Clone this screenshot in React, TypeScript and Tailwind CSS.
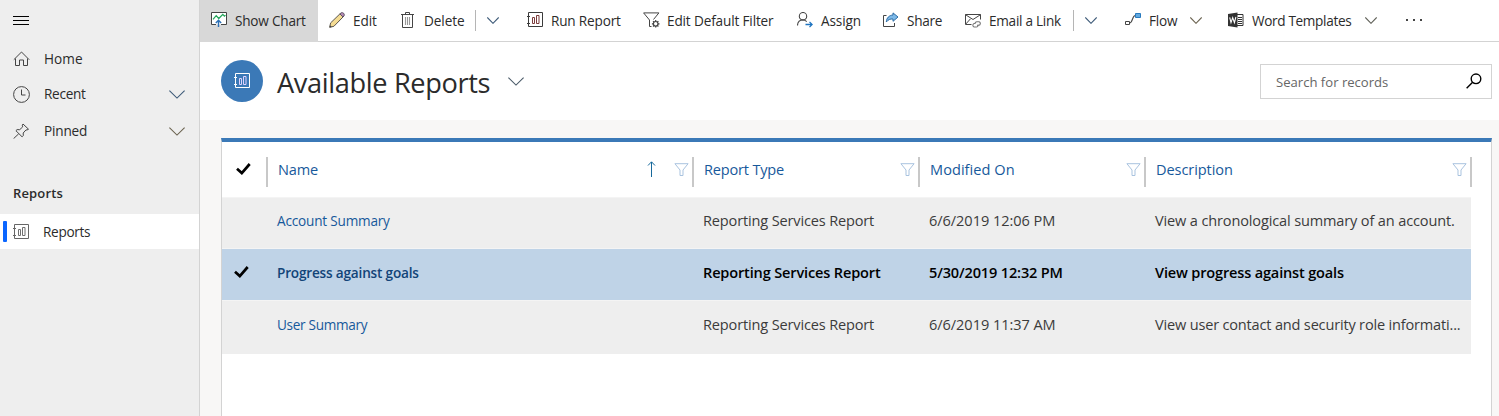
import React from "react";

type IconProps = { className?: string };

function Chevron({ className = "" }: IconProps) {
  return (
    <svg className={className} viewBox="0 0 16 9" fill="none" stroke="currentColor" strokeWidth="1.1" preserveAspectRatio="none">
      <path d="M.4.6 8 8.1 15.6.6" vectorEffect="non-scaling-stroke" />
    </svg>
  );
}

function ReportIcon({ className = "", bar = "currentColor" }: IconProps & { bar?: string }) {
  return (
    <svg className={className} viewBox="0 0 16 16" fill="none" stroke="currentColor">
      <path d="M1.5.5h14v14h-14zM0 4.5h3M0 11.5h3" />
      <path stroke={bar} d="M5.5 5.500h2v6h-2zM9.500 3.500h2.500v8H9.500z" />
    </svg>
  );
}

function ShowChartIcon() {
  return (
    <svg className="size-4" viewBox="0 0 16 16" fill="none">
      <path d="M.5.5h15v12H.5z" fill="#fff" />
      <path d="M5 12.500H.5V.5h15v12H10" stroke="#444" />
      <path d="m2 7.300 3.200-3.600 2.600 2.800 4-4.200 1.600 1.800 1.100-1" stroke="#21a559" strokeWidth="1.200" />
      <path d="M7.500 15V8.600M4.800 11l2.700-2.700 2.700 2.700" stroke="#2b6fb5" strokeWidth="1.400" />
    </svg>
  );
}

function EditIcon() {
  return (
    <svg className="size-4" viewBox="0 0 16 16" fill="none" strokeLinejoin="round">
      <path d="M1.600 10.900 10.900 1.900 14 5 4.900 14.300.7 15.300z" fill="#f5dc93" stroke="#5c564c" />
      <path d="M10.900 1.900 12.200.8Q13.600.3 14.700 1.300 15.700 2.600 15 4L14 5z" fill="#b78bb5" stroke="#5d5265" />
      <path d="M.5 15.500 1 13.200 2.800 15z" fill="#444" />
    </svg>
  );
}

function DeleteIcon() {
  return (
    <svg className="size-4" viewBox="0 0 16 16" fill="none" stroke="#454545">
      <path d="M1 2.500h13M5.500 2.500v-2h4v2M2.500 2.500v13h10v-13" />
      <path d="M5.500 5v8M7.500 5v8M9.500 5v8" stroke="#999" strokeWidth="1.100" />
    </svg>
  );
}

function FilterGearIcon() {
  return (
    <svg className="h-4 w-[17px] shrink-0" viewBox="0 0 17 16" fill="none" stroke="#454545">
      <path d="M8.500 14.500H6.500V8L.6.900h15.300L10.500 7.500" />
      <circle cx="12.700" cy="11.800" r="2.300" strokeWidth="1.200" />
      <path strokeWidth="1.200" d="M12.700 8v1.500M12.700 14.100v1.500M8.900 11.800h1.500M15 11.800h1.500M10 9.100l1.100 1.100M14.300 13.400l1.100 1.100M15.400 9.100l-1.100 1.100M11.100 13.400 10 14.500" />
    </svg>
  );
}

function AssignIcon() {
  return (
    <svg className="size-4" viewBox="0 0 16 16" fill="none" stroke="#454545">
      <circle cx="6" cy="4.200" r="3.700" strokeWidth="1.100" />
      <path d="M.5 13.500C.6 10 3 8 6 8c1.500 0 2.800.6 3.700 1.600" strokeWidth="1.100" />
      <path d="M8.500 12.500h6.500M12.500 9.900l2.600 2.600-2.600 2.600" stroke="#1f74c0" strokeWidth="1.300" />
    </svg>
  );
}

function ShareIcon() {
  return (
    <svg className="size-4" viewBox="0 0 16 16" fill="none">
      <path d="M3.500 3.500h-3v11h11V11" stroke="#454545" />
      <path d="M10 .9 15 5l-5 4.300V7C7.300 6.700 5.200 7.600 3.300 10 3.500 6 6 3.300 10 3z" fill="#7db9e8" stroke="#2c6ca5" strokeLinejoin="round" />
    </svg>
  );
}

function EmailIcon() {
  return (
    <svg className="size-4" viewBox="0 0 16 16" fill="none" stroke="#454545">
      <path d="M6.500 12.500h-6v-10h15v5M.5 2.700 8 7.500l7.500-4.800M.8 12 5.500 6.800" />
      <path d="M10.500 11.500H9a1.900 1.900 0 0 0 0 3.500h2.400a1.800 1.800 0 0 0 1.600-2.300M12 13.300h1.500a1.800 1.800 0 0 0 .6-3.500h-2.300a1.800 1.800 0 0 0-1.700 2" stroke="#777" strokeWidth="1.100" />
    </svg>
  );
}

function FlowIcon() {
  return (
    <svg className="size-4" viewBox="0 0 16 16" fill="none">
      <path d="M.5 9.500h4v3h-4z" stroke="#454545" />
      <path d="M4.500 11c3.500 0 2.300-7.500 6-7.500" stroke="#454545" strokeWidth="1.200" />
      <path d="M10.500 1.500h5v4h-5z" fill="#62a9df" stroke="#287abf" />
    </svg>
  );
}

function WordIcon() {
  return (
    <svg className="size-4" viewBox="0 0 16 16" fill="none">
      <path d="M9 2.500h6v11H9" fill="#fff" stroke="#333" />
      <path d="M10 5.500h4M10 7.500h4M10 9.500h4M10 11.500h4" stroke="#333" />
      <path d="M0 2 9.500.4v15.200L0 14z" fill="#333" />
      <path d="m1.700 5.300 1.300 5.300 1.700-5 1.700 5 1.500-5.600" stroke="#fff" strokeWidth="1.100" />
    </svg>
  );
}

function FunnelIcon() {
  return (
    <svg className="h-[13px] w-[15px] shrink-0" viewBox="0 0 15 13" fill="none" stroke="#a9c3df">
      <path d="M.9.700h13.200L9 7v5.500H6V7z" />
    </svg>
  );
}

function CheckIcon() {
  return (
    <svg className="h-3 w-[15px]" viewBox="0 0 15 12" fill="none" stroke="#000" strokeWidth="2.700">
      <path d="m1 5.800 4.800 4.300L13.700 1" />
    </svg>
  );
}

type CommandProps = {
  icon: React.ReactNode;
  label: string;
  width: string;
  text: string;
  active?: boolean;
  children?: React.ReactNode;
};

function Command({ icon, label, width, text, active, children }: CommandProps) {
  return (
    <button className={`flex shrink-0 items-center pl-[11px] ${width} ${active ? "h-[42px] bg-[#d8d8d8] pl-3 pb-px" : "h-[41px]"}`}>
      <span className="-mt-px flex w-[24px] shrink-0">{icon}</span>
      <span className={`-ml-px whitespace-nowrap pl-px pt-[2px] ${text}`}>{label}</span>
      {children}
    </button>
  );
}

function SplitArrow() {
  return (
    <>
      <span className="h-[21px] w-px shrink-0 bg-[#b5b5b5]" />
      <Chevron className="ml-[11px] h-[7px] w-3 shrink-0 text-[#3d5a78]" />
    </>
  );
}

function Toolbar() {
  return (
    <div className="flex h-[42px] items-start border-b border-[#d3d3d3] text-[13.6px] text-[#2b2b2b]">
      <Command active icon={<ShowChartIcon />} label="Show Chart" width="w-[118px]" text="tracking-[-0.22px]" />
      <Command icon={<EditIcon />} label="Edit" width="w-[71px]" text="tracking-[-0.09px]" />
      <Command icon={<DeleteIcon />} label="Delete" width="w-[127px]" text="w-[52px] text-left tracking-[-0.1px]">
        <SplitArrow />
      </Command>
      <Command icon={<ReportIcon className="size-4 text-[#3b3b3b]" bar="#7b3b3b" />} label="Run Report" width="w-[116px]" text="tracking-[-0.18px]" />
      <Command icon={<FilterGearIcon />} label="Edit Default Filter" width="w-[154px]" text="tracking-[-0.15px]" />
      <Command icon={<AssignIcon />} label="Assign" width="w-[86px]" text="tracking-[-0.12px]" />
      <Command icon={<ShareIcon />} label="Share" width="w-[82px]" text="tracking-[-0.3px]" />
      <Command icon={<EmailIcon />} label="Email a Link" width="w-[160px]" text="w-[85px] text-left tracking-[-0.27px]">
        <SplitArrow />
      </Command>
      <Command icon={<FlowIcon />} label="Flow" width="w-[103px]" text="w-[42px] text-left tracking-[-0.2px]">
        <Chevron className="h-[7px] w-3 shrink-0 text-[#6b6350]" />
      </Command>
      <Command icon={<WordIcon />} label="Word Templates" width="w-[177px]" text="w-[114px] text-left tracking-[-0.34px]">
        <Chevron className="h-[7px] w-3 shrink-0 text-[#5f6058]" />
      </Command>
      <div className="flex h-[40px] items-center gap-[5px] pl-3">
        <span className="size-[2px] bg-[#444]" />
        <span className="size-[2px] bg-[#444]" />
        <span className="size-[2px] bg-[#444]" />
      </div>
    </div>
  );
}

function Sidebar() {
  return (
    <nav className="w-[200px] shrink-0 border-r border-[#d3d3d3] bg-[#eee] text-[13.6px] text-[#2b2b2b]">
      <div className="flex h-10 items-center pl-[13px]">
        <div className="flex flex-col gap-[3px]">
          <span className="h-px w-4 bg-black" />
          <span className="h-px w-4 bg-black" />
          <span className="h-px w-4 bg-black" />
        </div>
      </div>
      <div className="flex h-9 items-center pl-[13px] pt-0.5">
        <svg className="mr-[14px] h-4 w-[17px]" viewBox="0 0 17 16" fill="none" stroke="#454545">
          <path d="M.8 8.700 8.500 1l7.700 7.700M2.500 7.500v7h4V9h4v5.500h4v-7" />
        </svg>
        <span className="tracking-[0.05px]">Home</span>
      </div>
      <div className="flex h-9 items-center pl-[13px]">
        <svg className="mr-[14px] size-[17px]" viewBox="0 0 17 17" fill="none" stroke="#454545">
          <circle cx="8.500" cy="8.500" r="7.900" />
          <path d="M8.500 3.500v5.500h4" />
        </svg>
        <span className="pt-px tracking-[-0.29px]">Recent</span>
        <Chevron className="ml-auto mr-[14px] h-[9px] w-4 text-[#3d5a78]" />
      </div>
      <div className="flex h-[38px] items-center pl-[13px]">
        <svg className="mr-[14px] h-4 w-[17px]" viewBox="0 0 17 16" fill="none" stroke="#454545">
          <path d="m10 1 5.500 5.200-1.500.8-1-.1-2.800 3.100.1 2.500-1.200 1.300-6.200-6.100 1.200-1.100 2.600.1L9.700 3.900 9.300 2.200zM5.700 10.800.6 15.600" strokeLinejoin="round" />
        </svg>
        <span className="tracking-[-0.18px]">Pinned</span>
        <Chevron className="ml-auto mr-[14px] h-[9px] w-4 text-[#6b6350]" />
      </div>
      <div className="flex h-16 items-end pb-[11px] pl-[13px] text-[13px] font-semibold leading-5">
        <span className="tracking-[0.16px]">Reports</span>
      </div>
      <div className="flex h-[35px] items-center bg-white pl-[3px]">
        <span className="h-[21px] w-1 rounded-[1px] bg-[#0b66ff]" />
        <ReportIcon className="ml-1.5 mr-[14px] size-4 text-[#666]" bar="#707070" />
        <span className="pt-[2px] tracking-[-0.31px]">Reports</span>
      </div>
    </nav>
  );
}

function PageHeader() {
  return (
    <header className="flex h-[78px] items-start bg-white pl-[21px] pr-[7px]">
      <div className="mt-[18px] flex size-[42px] items-center justify-center rounded-full bg-[#3b79b7]">
        <ReportIcon className="size-4 text-white" bar="#ded2ff" />
      </div>
      <h1 className="ml-[14px] mt-[22px] text-[27.2px] leading-[38px] tracking-[-0.36px] text-[#2b2b2b]">Available Reports</h1>
      <Chevron className="ml-[18px] mt-[35px] h-[9px] w-4 text-[#4a5a68]" />
      <div className="ml-auto mt-[22px] flex h-[35px] w-[232px] items-center border border-[#d3d3d3] pl-[15px] pr-[9px]">
        <span className="pt-[2px] text-[13.1px] text-[#666]">Search for records</span>
        <svg className="-mt-0.5 ml-auto size-4" viewBox="0 0 16 16" fill="none" stroke="#000" strokeWidth="1.400">
          <circle cx="10" cy="5.800" r="4.800" />
          <path d="M6.600 9.300.6 15.300" />
        </svg>
      </div>
    </header>
  );
}

const gridCols = "grid grid-cols-[46px_426px_226px_226px_326px]";

const columns = [
  { label: "Name", text: "tracking-[-0.17px]", sorted: true },
  { label: "Report Type", text: "tracking-[-0.19px]" },
  { label: "Modified On", text: "tracking-[0.05px]" },
  { label: "Description", text: "tracking-[-0.08px]" },
];

const rows = [
  {
    name: "Account Summary", nameText: "tracking-[-0.2px]",
    type: "Reporting Services Report",
    modified: "6/6/2019 12:06 PM", modifiedText: "tracking-[-0.05px]",
    description: "View a chronological summary of an account.", descriptionText: "tracking-[-0.145px]",
    size: "h-[51px] pb-1",
  },
  {
    name: "Progress against goals", nameText: "tracking-[-0.19px]",
    type: "Reporting Services Report",
    modified: "5/30/2019 12:32 PM", modifiedText: "tracking-[-0.16px]",
    description: "View progress against goals", descriptionText: "tracking-[-0.166px]",
    size: "h-[52px] pb-[3px]",
    selected: true,
  },
  {
    name: "User Summary", nameText: "tracking-[-0.32px]",
    type: "Reporting Services Report",
    modified: "6/6/2019 11:37 AM", modifiedText: "tracking-[-0.05px]",
    description: "View user contact and security role informati...", descriptionText: "tracking-[-0.18px]",
    size: "h-[54px] pb-[5px]",
  },
];

function ReportGrid() {
  return (
    <section className="h-full border-x border-t-4 border-x-[#d3d3d3] border-t-[#3b79b7] bg-white text-[14.55px]">
      <div className={`${gridCols} h-[55px] pt-[15px] text-[#17599b]`}>
        <div className="flex h-[30px] items-center border-r-2 border-[#c8c8c8] pb-[7px] pl-[14px]">
          <CheckIcon />
        </div>
        {columns.map((column) => (
          <div key={column.label} className="flex h-[30px] items-center border-r-2 border-[#c8c8c8] pb-[5px] pl-[10px] pr-[3px]">
            <span className={column.text}>{column.label}</span>
            <span className="ml-auto flex items-center gap-[18px]">
              {column.sorted && (
                <svg className="-mt-px h-4 w-[9px]" viewBox="0 0 9 16" fill="none" stroke="#17699b">
                  <path d="M4.500 16V1M1 4.500l3.500-3.700L8 4.500" />
                </svg>
              )}
              <FunnelIcon />
            </span>
          </div>
        ))}
      </div>
      {rows.map((row) => (
        <div
          key={row.name}
          className={`${gridCols} mr-5 items-center overflow-hidden border-t border-[#f4f4f4] ${row.size} ${row.selected ? "bg-[#bfd3e7] font-semibold text-black" : "bg-[#eee] text-[#3b3b3b]"}`}
        >
          <div className="flex pb-[2px] pl-3">{row.selected && <CheckIcon />}</div>
          <div className={`pl-[9px] text-[13.6px] ${row.selected ? "text-[#124478]" : "text-[#17599b]"}`}>
            <span className={row.nameText}>{row.name}</span>
          </div>
          <div className="whitespace-nowrap pb-px pl-[9px]">
            <span className="tracking-[-0.155px]">{row.type}</span>
          </div>
          <div className="whitespace-nowrap pb-px pl-[9px]">
            <span className={row.modifiedText}>{row.modified}</span>
          </div>
          <div className="whitespace-nowrap pb-px pl-[9px]">
            <span className={row.descriptionText}>{row.description}</span>
          </div>
        </div>
      ))}
    </section>
  );
}

export default function App() {
  return (
    <div className="flex h-[416px] w-[1499px] overflow-hidden bg-white font-['Open_Sans','Noto_Sans',sans-serif]">
      <Sidebar />
      <div className="flex min-w-0 flex-1 flex-col">
        <Toolbar />
        <PageHeader />
        <main className="min-h-0 flex-1 bg-[#f8f7f6] pl-[21px] pr-[7px] pt-[18px]">
          <ReportGrid />
        </main>
      </div>
    </div>
  );
}
